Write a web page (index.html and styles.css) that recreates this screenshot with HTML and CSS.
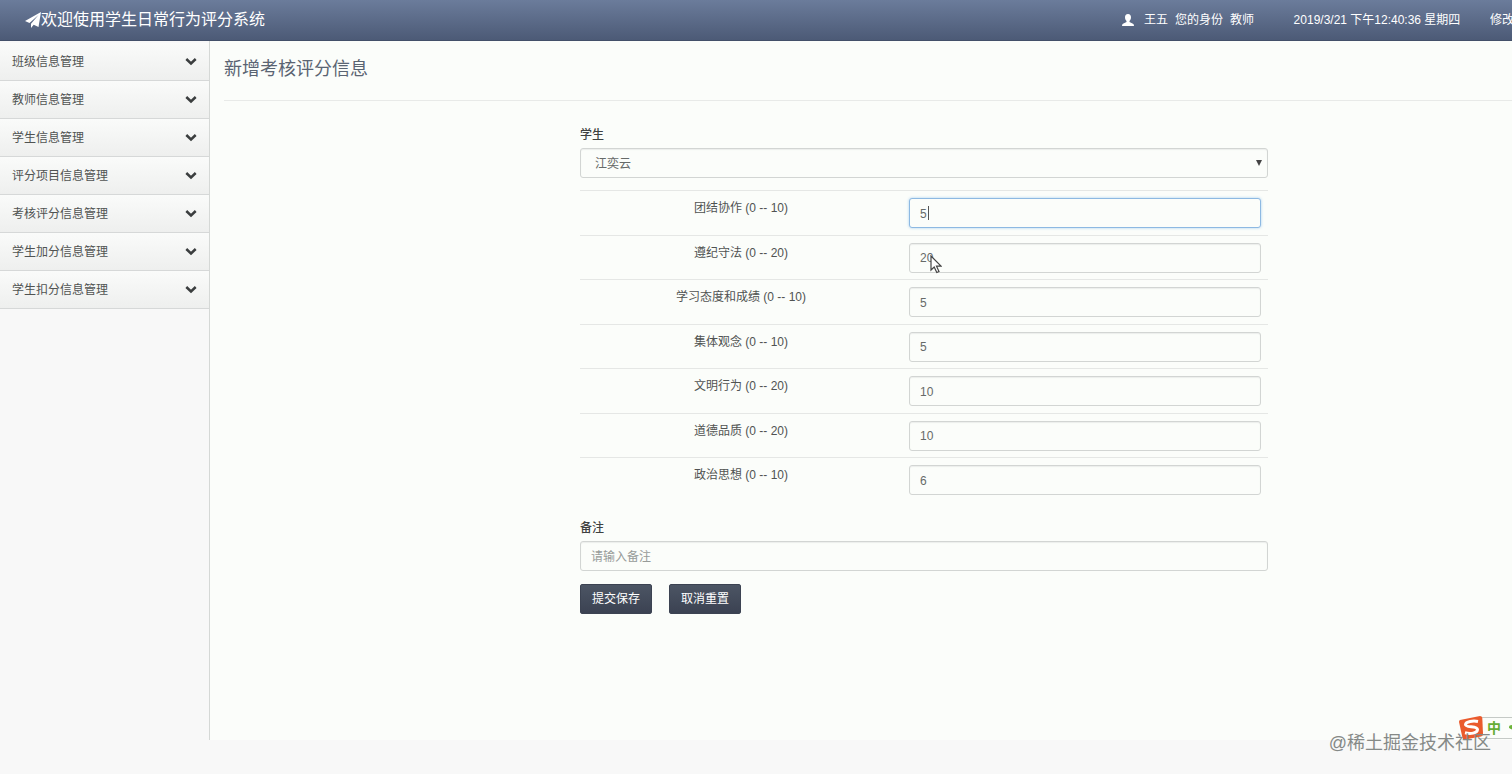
FILE: index.html
```html
<!DOCTYPE html>
<html lang="zh-CN">
<head>
<meta charset="utf-8">
<title>学生日常行为评分系统</title>
<link rel="stylesheet" href="styles.css">
</head>
<body>
<svg class="sprite" aria-hidden="true">
  <symbol id="chevron" viewBox="0 0 12 8"><path d="M1.300 1 6 5.500 10.700 1" fill="none" stroke="currentColor" stroke-width="2.500"/></symbol>
</svg>
<header class="topbar">
  <a class="brand" href="#">
    <svg class="plane" viewBox="0 0 16 16"><path fill="#fff" d="M16 0 13.500 15 8.700 12.800 6 16V11.700L13.500 3 4.500 10.900 0 9z"/></svg>
    <span>欢迎使用学生日常行为评分系统</span>
  </a>
  <div class="tools">
    <span class="user">
      <svg class="person" viewBox="0 0 12 12"><path fill="#fff" d="M6 0C3.900 0 3 1.500 3 3.300 3 5 3.700 6.300 4.500 7.100V8L1 9.700Q0 10.200 0 12H12Q12 10.200 11 9.700L7.500 8V7.100C8.300 6.300 9 5 9 3.300 9 1.500 8.100 0 6 0z"/></svg>
      <span>王五</span><span>您的身份</span><span>教师</span>
    </span>
    <time class="clock">2019/3/21 下午12:40:36 星期四</time>
    <a class="edit" href="#">修改</a>
  </div>
</header>
<div class="shell">
  <nav class="sidebar">
    <a class="item" href="#">班级信息管理<svg class="arrow"><use href="#chevron"/></svg></a>
    <a class="item" href="#">教师信息管理<svg class="arrow"><use href="#chevron"/></svg></a>
    <a class="item" href="#">学生信息管理<svg class="arrow"><use href="#chevron"/></svg></a>
    <a class="item" href="#">评分项目信息管理<svg class="arrow"><use href="#chevron"/></svg></a>
    <a class="item" href="#">考核评分信息管理<svg class="arrow"><use href="#chevron"/></svg></a>
    <a class="item" href="#">学生加分信息管理<svg class="arrow"><use href="#chevron"/></svg></a>
    <a class="item" href="#">学生扣分信息管理<svg class="arrow"><use href="#chevron"/></svg></a>
  </nav>
  <main class="main">
    <h1 class="title">新增考核评分信息</h1>
    <div class="columns">
      <form class="form">
        <label class="label" for="student">学生</label>
        <div class="picker">
          <select class="control select" id="student"><option>江奕云</option></select>
          <svg class="triangle" viewBox="0 0 6 6"><path d="M0 0H6L3 6z" fill="#444"/></svg>
        </div>
        <table class="scores">
          <tr><th scope="row"><label for="s1">团结协作 (0 -- 10)</label></th><td><div class="cell"><input class="control active" id="s1" value="5"><span class="caret"></span></div></td></tr>
          <tr><th scope="row"><label for="s2">遵纪守法 (0 -- 20)</label></th><td><div class="cell"><input class="control" id="s2" value="20"><svg class="pointer" viewBox="0 0 12 19"><path d="M1 1V15L4.200 12 6.800 17.500 9 16.500 6.500 11.200H11z" fill="#fff" stroke="#444" stroke-width="1.200"/></svg></div></td></tr>
          <tr><th scope="row"><label for="s3">学习态度和成绩 (0 -- 10)</label></th><td><input class="control" id="s3" value="5"></td></tr>
          <tr><th scope="row"><label for="s4">集体观念 (0 -- 10)</label></th><td><input class="control" id="s4" value="5"></td></tr>
          <tr><th scope="row"><label for="s5">文明行为 (0 -- 20)</label></th><td><input class="control" id="s5" value="10"></td></tr>
          <tr><th scope="row"><label for="s6">道德品质 (0 -- 20)</label></th><td><input class="control" id="s6" value="10"></td></tr>
          <tr><th scope="row"><label for="s7">政治思想 (0 -- 10)</label></th><td><input class="control" id="s7" value="6"></td></tr>
        </table>
        <label class="label" for="note">备注</label>
        <input class="control" id="note" placeholder="请输入备注">
        <div class="actions">
          <button class="button" type="submit">提交保存</button>
          <button class="button" type="reset">取消重置</button>
        </div>
      </form>
    </div>
  </main>
</div>
<div class="ime">
  <svg class="ime-logo" viewBox="0 0 26 26"><path d="M2 5 22 1Q24 1 24.300 3L25 19Q25 21 23 21.500L7 24.500Q5 24.700 4.500 23L1 7Q1 5.500 2 5z" fill="#ea5b2d"/><path d="M20 6.500C15 5.500 8 6.500 7.500 9.500 7.200 13 19.500 10.500 19.500 14.500 19.500 18.500 12 19 7 17.800" fill="none" stroke="#fff" stroke-width="3"/></svg>
  <div class="ime-bar"><span>中</span><svg class="moon" viewBox="0 0 4 8"><path d="M4 0Q0 0 0 3 0 5 4 6z" fill="#6db33a"/></svg></div>
</div>
<div class="watermark">@稀土掘金技术社区</div>
</body>
</html>
```

FILE: styles.css
```css
* { box-sizing: border-box; }

body {
  margin: 0;
  min-height: 100vh;
  overflow: hidden;
  background: #f8f8f8;
  color: #505352;
  font: 12px/18px "Liberation Sans", "Noto Sans CJK SC", sans-serif;
}

a { color: inherit; text-decoration: none; }

.sprite { display: none; }

.topbar {
  display: flex;
  justify-content: space-between;
  align-items: center;
  height: 41px;
  padding: 0 0 0 25px;
  background: linear-gradient(#6b7c9b, #4c5a76);
  border-bottom: 1px solid #435069;
  color: #fff;
  white-space: nowrap;
}

.brand { display: flex; align-items: center; font-size: 16px; line-height: 24px; }
.plane { width: 16px; height: 16px; }

.tools { display: flex; align-items: center; }
.user { display: flex; align-items: center; gap: 7px; margin-right: 36px; }
.person { width: 12px; height: 12px; margin-right: 3px; }
.clock { min-width: 174px; margin-right: 26px; text-align: center; }
.edit { width: 22px; overflow: hidden; }

.shell { display: flex; min-height: calc(100vh - 75px); }

.sidebar {
  flex: none;
  width: 210px;
  padding-top: 2px;
  border-right: 1px solid #d5d8d6;
}

.item {
  display: flex;
  justify-content: space-between;
  align-items: center;
  height: 38px;
  padding: 0 12px;
  border-bottom: 1px solid #d6d8d8;
  background: linear-gradient(#fafbfa, #eeefee);
}

.arrow { width: 12px; height: 8px; color: #3b3e3f; }

.main {
  flex: 1;
  min-width: 0;
  padding: 15px 0 0 14px;
  background: #fbfdfa;
}

.title {
  margin: 0 0 25px;
  padding-bottom: 17px;
  border-bottom: 1px solid #e8eae8;
  color: #5a6472;
  font-size: 18px;
  font-weight: 400;
  line-height: 27px;
}

.columns { display: grid; grid-template-columns: 356fr 688fr 244fr; }
.form { grid-column: 2; }

.label { display: block; margin-bottom: 4px; font-weight: 500; color: #3e4140; }

.control {
  display: block;
  width: 100%;
  height: 30px;
  padding: 1px 11px 0 10px;
  border: 1px solid #d2d5d3;
  border-radius: 3px;
  background: #fbfdfa;
  box-shadow: inset 0 1px 1px #eceeec;
  color: #666a68;
  font: inherit;
}

.control::placeholder { color: #979b99; opacity: 1; }

.active {
  border-color: #8db9e2;
  box-shadow: 0 0 3px #a8d0f0;
}

.picker { position: relative; margin-bottom: 12px; }
.select { appearance: none; padding: 2px 14px 0; }
.triangle { position: absolute; right: 6px; top: 12px; width: 6px; height: 6px; }

.scores {
  width: 100%;
  height: 312px;
  margin-bottom: 17px;
  border-collapse: separate;
  border-spacing: 0;
  table-layout: fixed;
}

.scores th, .scores td {
  padding: 7px 7px 6px 8px;
  border-top: 1px solid #e5e7e5;
  vertical-align: top;
}

.scores th { width: 321px; padding-top: 8px; font-weight: 400; }

.cell { position: relative; }
.caret { position: absolute; left: 19px; top: 8px; width: 1px; height: 14px; background: #555; }
.pointer { position: absolute; left: 21px; top: 12px; width: 12px; height: 19px; }

.actions { display: flex; gap: 17px; margin-top: 13px; }

.button {
  height: 30px;
  padding: 0 11px;
  border: 1px solid #3c4352;
  border-radius: 2px;
  background: linear-gradient(#4c5564, #3b4252);
  color: #fff;
  font: inherit;
}

.ime { position: absolute; right: 0; bottom: 33px; width: 54px; height: 26px; }
.ime-logo { position: absolute; left: 0; top: 0; width: 26px; height: 26px; }

.ime-bar {
  display: flex;
  align-items: center;
  justify-content: space-between;
  height: 22px;
  margin: 2px 0 0 22px;
  padding-left: 7px;
  border: solid #c5cac6;
  border-width: 1px 0;
  background: #fbfdfa;
  color: #65ad35;
  font-size: 14px;
  font-weight: 700;
}

.moon { width: 3px; height: 8px; }

.watermark {
  position: absolute;
  right: 21px;
  bottom: 17px;
  color: #858987;
  font-size: 18px;
  line-height: 27px;
}
```
